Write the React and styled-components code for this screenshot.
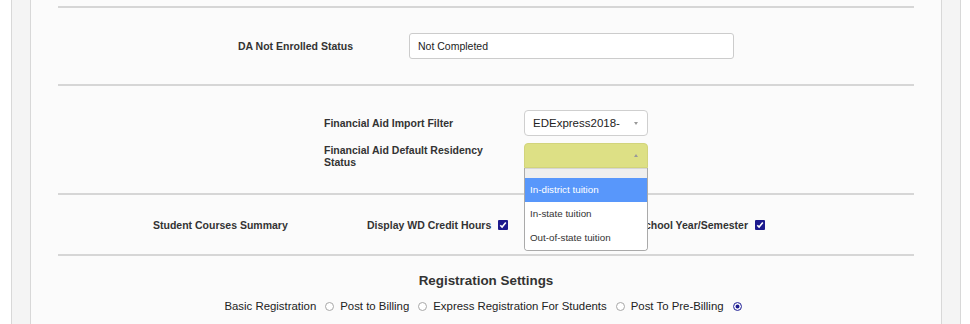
import React from 'react';
import styled, { createGlobalStyle } from 'styled-components';

const GlobalStyle = createGlobalStyle`
  html, body {
    margin: 0;
    padding: 0;
    background: #ffffff;
  }
  body {
    font-family: "Liberation Sans", Arial, sans-serif;
    color: #333333;
  }
`;

const Frame = styled.div`
  margin-left: 11px;
  width: 950px;
  min-height: 324px;
  box-sizing: border-box;
  padding: 0 18px;
  background: #f4f4f4;
  border-left: 1px solid #d8d8d8;
  border-right: 1px solid #d8d8d8;
`;

const Content = styled.div`
  min-height: 324px;
  box-sizing: border-box;
  padding: 6px 27px 0 27px;
  background: #fbfbfb;
  border-left: 1px solid #d8d8d8;
  border-right: 1px solid #d8d8d8;
`;

const Divider = styled.div`
  height: 2px;
  background: #d6d6d6;
`;

const Label = styled.span`
  font-size: 10.5px;
  font-weight: bold;
  line-height: 12px;
  color: #333;
`;

// DA Not Enrolled Status
const StatusRow = styled.div`
  height: 76px;
  display: flex;
  align-items: center;
`;

const StatusLabel = styled(Label)`
  width: 351px;
  box-sizing: border-box;
  padding-right: 56px;
  text-align: right;
`;

const TextInput = styled.div`
  width: 325px;
  height: 26px;
  box-sizing: border-box;
  padding: 0 8px;
  display: flex;
  align-items: center;
  background: #fff;
  border: 1px solid #cccccc;
  border-radius: 3px;
  font-size: 10.5px;
  color: #222;
`;

// Financial aid
const AidGrid = styled.div`
  padding: 24px 0 25px 266px;
  display: grid;
  grid-template-columns: 200px 124px;
  row-gap: 7px;
  align-items: center;
`;

const AidLabel = styled(Label)`
  max-width: 170px;
`;

const SelectWrap = styled.div`
  position: relative;
`;

const SelectBox = styled.div`
  height: ${p => (p.$open ? '25px' : '26px')};
  box-sizing: border-box;
  padding: 0 8px;
  display: flex;
  align-items: center;
  justify-content: space-between;
  background: ${p => (p.$open ? '#dde085' : '#ffffff')};
  border: 1px solid ${p => (p.$open ? '#d2d47c' : '#cfcfcf')};
  border-radius: ${p => (p.$open ? '4px 4px 0 0' : '4px')};
  font-size: 11.5px;
  color: #222;
`;

const Caret = styled.span`
  width: 0;
  height: 0;
  margin-right: 1px;
  border-left: 2.5px solid transparent;
  border-right: 2.5px solid transparent;
  ${p => (p.$up ? 'border-bottom: 3px solid #999;' : 'border-top: 3px solid #999;')}
`;

const Dropdown = styled.ul`
  position: absolute;
  top: 100%;
  left: 0;
  width: 100%;
  margin: 0;
  padding: 0;
  list-style: none;
  box-sizing: border-box;
  background: #fff;
  border: 1px solid #aaaaaa;
  border-top: none;
  border-radius: 0 0 4px 4px;
  z-index: 10;
  overflow: hidden;
`;

const Option = styled.li`
  height: ${p => (p.$blank ? '10px' : '24px')};
  line-height: 24px;
  padding: 0 5px;
  font-size: 9.8px;
  background: ${p => (p.$active ? '#5897fb' : p.$blank ? '#efefef' : '#fff')};
  color: ${p => (p.$active ? '#fff' : '#333')};
  border-top: ${p => (p.$blank ? '1px solid #d6d6d6' : 'none')};
  box-sizing: border-box;
`;

// Student courses summary
const SummaryRow = styled.div`
  height: 59px;
  box-sizing: border-box;
  padding: 0 149px 0 95px;
  display: flex;
  align-items: center;
`;

const SummaryLabel = styled(Label)`
  width: 214px;
`;

const CheckItem = styled.label`
  display: flex;
  align-items: center;
  gap: 7px;
  margin-left: ${p => (p.$push ? 'auto' : '0')};
`;

const Box = styled.span`
  width: 10px;
  height: 10px;
  display: inline-flex;
  align-items: center;
  justify-content: center;
  background: #1c1a8e;
  border-radius: 1px;
`;

const Checkbox = () => (
  <Box>
    <svg width="8" height="8" viewBox="0 0 8 8">
      <path d="M1.3 4.2 L3.1 6 L6.8 1.6" fill="none" stroke="#fff" strokeWidth="1.6" />
    </svg>
  </Box>
);

// Registration
const RegSection = styled.div`
  padding-top: 17px;
  display: flex;
  flex-direction: column;
  align-items: center;
`;

const Title = styled.div`
  font-size: 13.4px;
  font-weight: bold;
  line-height: 16px;
  color: #333;
`;

const RadioRow = styled.div`
  margin-top: 10px;
  display: flex;
  align-items: center;
  font-size: 11.4px;
  line-height: 14px;
  color: #222;
`;

const RadioText = styled.span`
  margin-right: 9px;
`;

const Radio = styled.span`
  width: 9px;
  height: 9px;
  box-sizing: border-box;
  margin-right: 6px;
  border-radius: 50%;
  border: 1px solid ${p => (p.$checked ? '#2a2a9a' : '#a8a8a8')};
  background: #fff;
  box-shadow: ${p => (p.$checked ? 'inset 0 0 0 1.5px #fff, inset 0 0 0 5px #1c1a8e' : 'none')};
`;

const radios = [
  { label: 'Basic Registration', checked: false },
  { label: 'Post to Billing', checked: false },
  { label: 'Express Registration For Students', checked: false },
  { label: 'Post To Pre-Billing', checked: true },
];

export default function App() {
  return (
    <>
      <GlobalStyle />
      <Frame>
        <Content>
          <Divider />
          <StatusRow>
            <StatusLabel>DA Not Enrolled Status</StatusLabel>
            <TextInput>Not Completed</TextInput>
          </StatusRow>
          <Divider />
          <AidGrid>
            <AidLabel>Financial Aid Import Filter</AidLabel>
            <SelectWrap>
              <SelectBox>
                <span>EDExpress2018-</span>
                <Caret />
              </SelectBox>
            </SelectWrap>
            <AidLabel>Financial Aid Default Residency Status</AidLabel>
            <SelectWrap>
              <SelectBox $open>
                <span></span>
                <Caret $up />
              </SelectBox>
              <Dropdown>
                <Option $blank />
                <Option $active>In-district tuition</Option>
                <Option>In-state tuition</Option>
                <Option>Out-of-state tuition</Option>
              </Dropdown>
            </SelectWrap>
          </AidGrid>
          <Divider />
          <SummaryRow>
            <SummaryLabel>Student Courses Summary</SummaryLabel>
            <CheckItem>
              <Label>Display WD Credit Hours</Label>
              <Checkbox />
            </CheckItem>
            <CheckItem $push>
              <Label>Display By School Year/Semester</Label>
              <Checkbox />
            </CheckItem>
          </SummaryRow>
          <Divider />
          <RegSection>
            <Title>Registration Settings</Title>
            <RadioRow>
              {radios.map(r => (
                <React.Fragment key={r.label}>
                  <RadioText>{r.label}</RadioText>
                  <Radio $checked={r.checked} />
                </React.Fragment>
              ))}
            </RadioRow>
          </RegSection>
        </Content>
      </Frame>
    </>
  );
}
